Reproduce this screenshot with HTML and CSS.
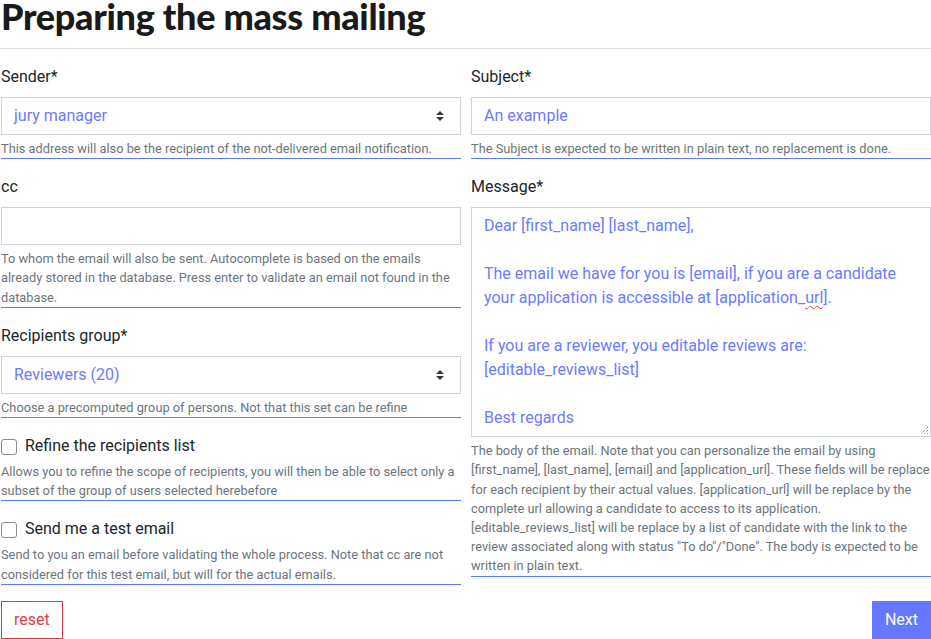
FILE: index.html
```html
<!DOCTYPE html>
<html lang="en">
<head>
<meta charset="utf-8">
<title>Preparing the mass mailing</title>
<link rel="stylesheet" href="styles.css">
</head>
<body>
<div class="page">
  <h1 class="title">Preparing the mass mailing</h1>
  <hr class="rule">
  <div class="columns">
    <div class="col">
      <div class="group">
        <label class="label">Sender*</label>
        <div class="control select"><span>jury manager</span>
          <svg class="arrows" width="8" height="10" viewBox="0 0 4 5"><path d="M2 0L0 2h4zm0 5L0 3h4z" fill="#343a40"/></svg>
        </div>
        <div class="help">This address will also be the recipient of the not-delivered email notification.</div>
      </div>
      <div class="group">
        <label class="label">cc</label>
        <div class="control"></div>
        <div class="help">To whom the email will also be sent. Autocomplete is based on the emails already stored in the database. Press enter to validate an email not found in the database.</div>
      </div>
      <div class="group">
        <label class="label">Recipients group*</label>
        <div class="control select"><span>Reviewers (20)</span>
          <svg class="arrows" width="8" height="10" viewBox="0 0 4 5"><path d="M2 0L0 2h4zm0 5L0 3h4z" fill="#343a40"/></svg>
        </div>
        <div class="help">Choose a precomputed group of persons. Not that this set can be refine</div>
      </div>
      <div class="group">
        <label class="check"><span class="box"></span>Refine the recipients list</label>
        <div class="help">Allows you to refine the scope of recipients, you will then be able to select only a subset of the group of users selected herebefore</div>
      </div>
      <div class="group">
        <label class="check"><span class="box"></span>Send me a test email</label>
        <div class="help">Send to you an email before validating the whole process. Note that cc are not considered for this test email, but will for the actual emails.</div>
      </div>
    </div>
    <div class="col">
      <div class="group">
        <label class="label">Subject*</label>
        <div class="control"><span>An example</span></div>
        <div class="help">The Subject is expected to be written in plain text, no replacement is done.</div>
      </div>
      <div class="group">
        <label class="label">Message*</label>
        <div class="textarea">Dear [first_name] [last_name],

The email we have for you is [email], if you are a candidate your application is accessible at [application_<span class="typo">url</span>].

If you are a reviewer, you editable reviews are:
[editable_reviews_list]

Best regards<svg class="grip" width="9" height="9" viewBox="0 0 9 9"><path d="M8 1L1 8M8 4L4 8M8 7L7 8" stroke="#555" stroke-width="1" stroke-dasharray="1 1"/></svg></div>
        <div class="help">The body of the email. Note that you can personalize the email by using [first_name], [last_name], [email] and [application_url]. These fields will be replace for each recipient by their actual values. [application_url] will be replace by the complete url allowing a candidate to access to its application. [editable_reviews_list] will be replace by a list of candidate with the link to the review associated along with status "To do"/"Done". The body is expected to be written in plain text.</div>
      </div>
    </div>
  </div>
  <div class="actions">
    <button class="btn reset">reset</button>
    <button class="btn next">Next</button>
  </div>
</div>
</body>
</html>
```

FILE: styles.css
```css
html, body {
  margin: 0;
  padding: 0;
  background: #fff;
}
body {
  font-family: Roboto, "Liberation Sans", sans-serif;
  font-size: 16px;
  line-height: 1.5;
  color: #212529;
}
.page {
  padding-left: 1px;
  width: 930px;
}
.title {
  margin: 0;
  font-family: Lato, "Liberation Sans", sans-serif;
  font-weight: 900;
  font-size: 36px;
  line-height: 32px;
  color: #1a1a1a;
  letter-spacing: -0.3px;
}
.rule {
  margin: 16px 0 16px -1px;
  border: 0;
  border-top: 1px solid #dcdce0;
  height: 0;
  width: 931px;
}
.columns {
  display: grid;
  grid-template-columns: 460px 460px;
  column-gap: 10px;
}
.group {
  margin-bottom: 16px;
}
.label {
  display: block;
  margin-bottom: 8px;
  height: 24px;
}
.control {
  box-sizing: border-box;
  height: 38px;
  border: 1px solid #ced4da;
  padding: 6px 12px;
  color: #6b7bff;
  display: flex;
  align-items: center;
  justify-content: space-between;
}
.select .arrows {
  margin-right: 4px;
}
.help {
  margin-top: 4px;
  font-size: 12.8px;
  line-height: 19.2px;
  color: #6c757d;
  border-bottom: 1px solid #5f7cf7;
}
.check {
  display: flex;
  align-items: center;
  height: 24px;
  font-size: 16px;
}
.box {
  box-sizing: border-box;
  width: 16px;
  height: 16px;
  border: 1px solid #8a8a8a;
  border-radius: 3px;
  margin-right: 8px;
  margin-top: 1px;
}
.textarea {
  position: relative;
  box-sizing: border-box;
  height: 230px;
  border: 1px solid #ced4da;
  padding: 6px 12px;
  color: #6b7bff;
  white-space: pre-wrap;
  overflow: hidden;
}
.typo {
  text-decoration: underline wavy #e53935;
  text-decoration-thickness: 1px;
  text-underline-offset: 2px;
}
.grip {
  position: absolute;
  right: 1px;
  bottom: 1px;
}
.actions {
  display: flex;
  justify-content: space-between;
}
.btn {
  box-sizing: border-box;
  height: 38px;
  padding: 6px 12px;
  font-family: Roboto, "Liberation Sans", sans-serif;
  font-size: 16px;
  line-height: 24px;
  border-radius: 0;
  cursor: pointer;
}
.reset {
  background: #fff;
  border: 1px solid #dc3545;
  color: #e03c4c;
}
.next {
  background: #6578ff;
  border: 1px solid #6578ff;
  color: #fff;
}
```
